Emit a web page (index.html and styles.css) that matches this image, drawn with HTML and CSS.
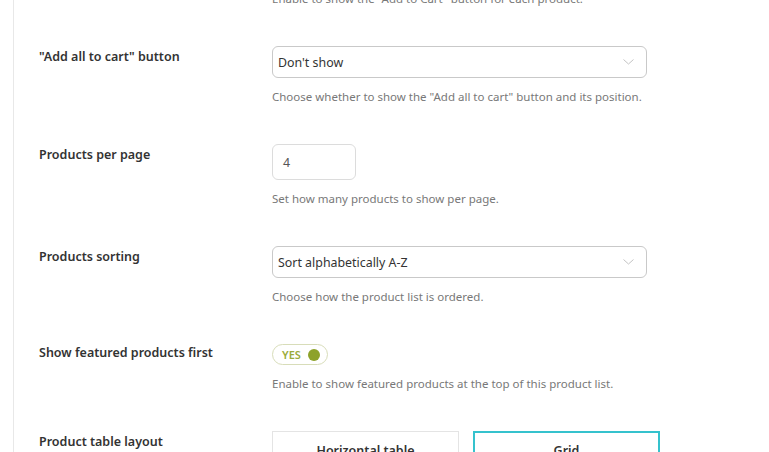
FILE: index.html
```html
<!DOCTYPE html>
<html>
<head>
<meta charset="utf-8">
<link rel="stylesheet" href="styles.css">
</head>
<body>
<div class="panel">
  <div class="rows">
    <div class="row">
      <div class="label"></div>
      <div class="field">
        <p class="help first">Enable to show the "Add to Cart" button for each product.</p>
      </div>
    </div>
    <div class="row">
      <div class="label">"Add all to cart" button</div>
      <div class="field">
        <div class="select"><span>Don't show</span>
          <svg class="chev" width="11" height="6" viewBox="0 0 11 6"><path d="M0.5 0.5 L5.5 5 L10.5 0.5" fill="none" stroke="#c4c4c4" stroke-width="1"/></svg>
        </div>
        <p class="help">Choose whether to show the "Add all to cart" button and its position.</p>
      </div>
    </div>
    <div class="row">
      <div class="label">Products per page</div>
      <div class="field">
        <div class="num">4</div>
        <p class="help">Set how many products to show per page.</p>
      </div>
    </div>
    <div class="row">
      <div class="label">Products sorting</div>
      <div class="field">
        <div class="select"><span>Sort alphabetically A-Z</span>
          <svg class="chev" width="11" height="6" viewBox="0 0 11 6"><path d="M0.5 0.5 L5.5 5 L10.5 0.5" fill="none" stroke="#c4c4c4" stroke-width="1"/></svg>
        </div>
        <p class="help">Choose how the product list is ordered.</p>
      </div>
    </div>
    <div class="row">
      <div class="label tight">Show featured products first</div>
      <div class="field">
        <div class="toggle"><span class="yes">YES</span><span class="dot"></span></div>
        <p class="help">Enable to show featured products at the top of this product list.</p>
      </div>
    </div>
    <div class="row">
      <div class="label">Product table layout</div>
      <div class="field">
        <div class="layouts">
          <div class="layout">Horizontal table</div>
          <div class="layout active">Grid</div>
        </div>
      </div>
    </div>
  </div>
</div>
</body>
</html>
```
FILE: styles.css
```css
html, body {
  margin: 0;
  padding: 0;
  background: #fff;
  overflow: hidden;
}
body {
  font-family: "Noto Sans", "Open Sans", sans-serif;
  font-size: 12.4px;
  color: #333;
}
.panel {
  margin-left: 13px;
  border-left: 1px solid #e8e8e8;
  height: 452px;
  overflow: hidden;
}
.rows {
  margin-top: -10px;
  padding-left: 25px;
}
.row {
  display: grid;
  grid-template-columns: 233px 1fr;
  padding-bottom: 38px;
}
.label {
  font-size: 12.5px;
  font-weight: 600;
  line-height: 18px;
  margin-top: 2px;
  color: #333;
}
.label.tight {
  margin-top: 0;
}
.help {
  margin: 10px 0 0;
  font-size: 11.5px;
  line-height: 18px;
  color: #787878;
}
.help.first {
  margin-top: 0;
}
.select {
  box-sizing: border-box;
  width: 375px;
  height: 32px;
  border: 1px solid #c9c9c9;
  border-radius: 6px;
  display: flex;
  align-items: center;
  justify-content: space-between;
  padding: 0 12px 0 5px;
  color: #333;
}
.chev {
  display: block;
}
.num {
  box-sizing: border-box;
  width: 84px;
  height: 36px;
  border: 1px solid #dcdcdc;
  border-radius: 6px;
  display: flex;
  align-items: center;
  padding-left: 10px;
  color: #555;
}
.toggle {
  box-sizing: border-box;
  width: 56px;
  height: 21px;
  border: 1px solid #d8ddb9;
  border-radius: 11px;
  display: flex;
  align-items: center;
  padding: 0 7px 0 9px;
  justify-content: space-between;
}
.yes {
  font-size: 11px;
  font-weight: 600;
  color: #9aab3c;
  line-height: 1;
}
.dot {
  width: 12px;
  height: 12px;
  border-radius: 50%;
  background: #8da22a;
}
.layouts {
  display: flex;
  gap: 14px;
}
.layout {
  box-sizing: border-box;
  width: 187px;
  height: 60px;
  border: 1px solid #e4e4e4;
  text-align: center;
  padding-top: 10px;
  font-size: 12.5px;
  font-weight: 600;
  color: #333;
  line-height: 18px;
}
.layout.active {
  border: 2px solid #35c2cd;
  padding-top: 9px;
}
```
